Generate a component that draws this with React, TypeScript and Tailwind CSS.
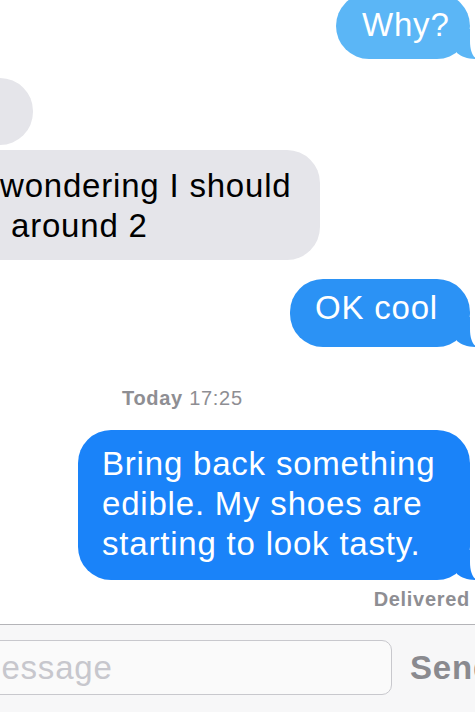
import React from "react";

const font = { fontFamily: '"Liberation Sans", Arial, sans-serif' };

// iOS 7 style tail, drawn at the bottom right of an outgoing bubble
const Tail = ({ color }: { color: string }) => (
  <svg
    className="absolute right-[-10px] bottom-0 w-[26px] h-[30px] overflow-visible"
    viewBox="0 0 26 30"
  >
    <path
      d="M3 0 H16 V12 C16 22 19 28 23 30 C14 30 8 28 3 24 Z"
      fill={color}
    />
  </svg>
);

const Sent = ({
  color,
  className,
  children,
}: {
  color: string;
  className: string;
  children: React.ReactNode;
}) => (
  <div
    className={`relative self-end mr-[5px] rounded-[33px] text-white text-[33px] leading-[40px] tracking-[0.8px] ${className}`}
    style={{ backgroundColor: color }}
  >
    {children}
    <Tail color={color} />
  </div>
);

export default function App() {
  return (
    <div
      className="w-[475px] h-[712px] overflow-hidden bg-white flex flex-col"
      style={font}
    >
      <Sent color="#5bb6f6" className="mt-[-7px] w-[134px] pl-[26px] pt-[12px] pb-[14px]">
        Why?
      </Sent>

      <div className="self-start ml-[-100px] mt-[19px] w-[133px] h-[67px] rounded-[33px] bg-[#e5e5ea]" />

      <div className="self-start ml-[-200px] mt-[5px] w-[520px] rounded-[33px] bg-[#e5e5ea] pt-[16px] pb-[14px] text-black text-[33px] leading-[40px] tracking-[0.8px]">
        <div className="pl-[200px]">wondering I should</div>
        <div className="pl-[211px]">around 2</div>
      </div>

      <Sent color="#2b92f5" className="mt-[19px] w-[180px] pl-[25px] pt-[9px] pb-[19px]">
        OK cool
      </Sent>

      <div className="self-start ml-[122px] mt-[39px] text-[20px] leading-[24px] tracking-[0.7px] text-[#8e8e93]">
        <span className="font-bold">Today</span> 17:25
      </div>

      <Sent color="#1a83f9" className="mt-[20px] w-[392px] pl-[24px] pr-[10px] pt-[14px] pb-[16px]">
        Bring back something edible. My shoes are starting to look tasty.
      </Sent>

      <div className="self-end mr-[5px] mt-[7px] text-[20px] leading-[24px] tracking-[0.7px] font-bold text-[#8e8e93]">
        Delivered
      </div>

      <div className="mt-[13px] flex-1 border-t border-[#b4b4b8] bg-[#f7f7f8] flex items-start">
        <div className="shrink-0 ml-[-50px] mt-[15px] w-[442px] h-[55px] rounded-[10px] border border-[#c8c8cd] bg-[#fafafa] flex items-center pl-[14px]">
          <span className="text-[33px] tracking-[0.8px] text-[#c7c7cd] whitespace-nowrap">
            iMessage
          </span>
        </div>
        <div className="shrink-0 ml-[18px] mt-[15px] h-[55px] flex items-center text-[33px] font-bold tracking-[0.8px] text-[#8a8a8f] whitespace-nowrap">
          Send
        </div>
      </div>
    </div>
  );
}
